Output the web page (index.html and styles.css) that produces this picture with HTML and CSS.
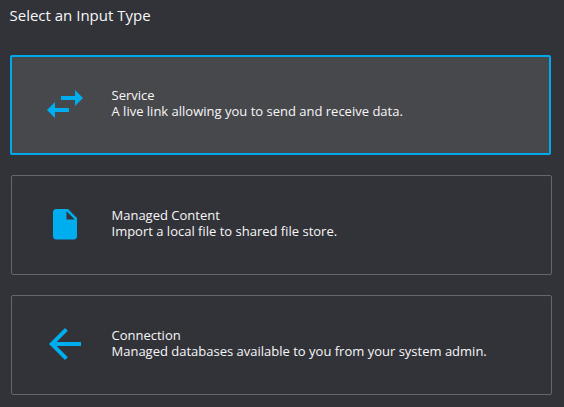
FILE: index.html
```html
<!DOCTYPE html>
<html lang="en">
<head>
<meta charset="utf-8">
<title>Select an Input Type</title>
<link rel="stylesheet" href="styles.css">
</head>
<body>
<h1 class="title">Select an Input Type</h1>
<main class="options">
  <section class="card selected">
    <svg class="icon" viewBox="0 0 24 24"><path d="M6.990 11 3 15l3.990 4v-3H14v-2H6.990zM21 9l-3.990-4v3H10v2h7.010v3z"/></svg>
    <div class="text"><h2>Service</h2><p>A live link allowing you to send and receive data.</p></div>
  </section>
  <section class="card">
    <svg class="icon" viewBox="-4 -4 32 32"><path d="M6 2C4.900 2 4 2.900 4 4v16.300c0 1.100.9 2 2 2h12c1.100 0 2-.9 2-2V8l-6-6H6zm7 7V3.500L18.500 9H13z"/></svg>
    <div class="text"><h2>Managed Content</h2><p>Import a local file to shared file store.</p></div>
  </section>
  <section class="card">
    <svg class="icon" viewBox="0 0 24 24"><path d="M20 11H7.830l5.590-5.590L12 4l-8 8 8 8 1.410-1.410L7.830 13H20z"/></svg>
    <div class="text"><h2>Connection</h2><p>Managed databases available to you from your system admin.</p></div>
  </section>
</main>
</body>
</html>
```
FILE: styles.css
```css
body {
  margin: 0;
  background: #323338;
  color: #f7f7f8;
  font: 13px/16px "Open Sans", sans-serif;
}
h1, h2, p { margin: 0; font-weight: 400; font-size: inherit; }
.title { padding: 5px 9.5px 0; font-size: 15px; line-height: 20px; }
.options {
  display: flex;
  flex-direction: column;
  gap: 20px;
  padding: 30px 12px 0 11px;
}
.card {
  box-sizing: border-box;
  height: 100px;
  display: flex;
  align-items: center;
  border: 1px solid #66676b;
  border-radius: 2px;
  padding: 0 29px 2px;
}
.card.selected {
  margin-left: -1px;
  margin-right: 1px;
  padding-left: 29px;
  border: 2px solid #00a9ec;
  background: #47484c;
}
.icon { width: 48px; height: 48px; margin-right: 22.5px; fill: #00adee; }
.text { padding-bottom: 2px; }
```
